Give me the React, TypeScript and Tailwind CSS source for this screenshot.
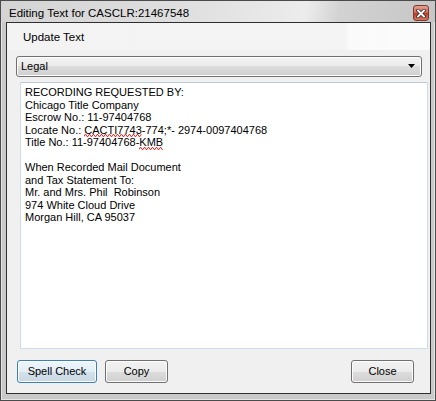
import React from "react";

const font = { fontFamily: '"Liberation Sans", Arial, sans-serif' };

function Squiggle({ children }: { children: React.ReactNode }) {
  const id = React.useId().replace(/:/g, "");
  return (
    <span className="relative inline-block">
      {children}
      <svg className="absolute left-0 bottom-[-1px] w-full h-[3px]" height="3">
        <defs>
          <pattern id={`sq${id}`} width="4" height="3" patternUnits="userSpaceOnUse">
            <path d="M0 2.5 L1 0.5 L2 0.5 L3 2.5 L4 2.5" stroke="#ff2a2a" strokeWidth="1" fill="none" />
          </pattern>
        </defs>
        <rect width="100%" height="3" fill={`url(#sq${id})`} />
      </svg>
    </span>
  );
}

export default function App() {
  const btn =
    "h-[23px] rounded-[3px] border text-[11px] text-black flex items-center justify-center shadow-[inset_0_0_0_1px_#fcfcfc]";
  const grayGrad =
    "border-[#707070] bg-[linear-gradient(#f2f2f2,#ebebeb_50%,#dddddd_50%,#cfcfcf)]";
  return (
    <div className="w-[436px] h-[401px] bg-white" style={font}>
      <div className="w-[436px] h-[401px] border border-[#4b4b4b] flex flex-col bg-[#c9c9c9] shadow-[inset_0_0_0_1px_#e6e6e6]">
        {/* title bar */}
        <div className="h-[21px] flex items-start justify-between bg-[linear-gradient(100deg,#d4d4d4_0%,#dedede_40%,#ececec_70%,#d2d2d2_78%,#c6c6c6_100%)]">
          <span className="text-[11.5px] text-black pl-[8px] pt-[5px] leading-[14px]">
            Editing Text for CASCLR:21467548
          </span>
          <div className="mt-[4px] mr-[6px] w-[16px] h-[16px] rounded-[3px] border border-[#7a3a30] bg-[linear-gradient(#e8a090,#d06550_50%,#b83a28_50%,#d8765e)] flex items-center justify-center">
            <svg width="10" height="9" viewBox="0 0 10 9">
              <path d="M2 1.5 L8 7.5 M8 1.5 L2 7.5" stroke="#3a2a2a" strokeWidth="3.4" strokeLinecap="square" />
              <path d="M2 1.5 L8 7.5 M8 1.5 L2 7.5" stroke="#ffffff" strokeWidth="1.8" strokeLinecap="square" />
            </svg>
          </div>
        </div>
        {/* frame body */}
        <div className="flex-1 pl-[5px] pr-[4px] pb-[6px] flex flex-col">
          <div className="flex-1 border border-[#2e2e2e] bg-[#f0f0f0] flex flex-col">
            {/* menu strip */}
            <div className="h-[27px] flex items-center pl-[16px] bg-[linear-gradient(90deg,#f3f3f3_0%,#f4f4f4_80%,#fafafa_81%,#fbfbfb_100%)]">
              <span className="text-[11.5px] text-black leading-[14px]">Update Text</span>
            </div>
            {/* combo */}
            <div
              className={`mt-[6px] ml-[9px] w-[406px] h-[21px] rounded-[3px] border flex items-center justify-between pl-[4px] pr-[5px] shadow-[inset_0_0_0_1px_#fcfcfc] ${grayGrad}`}
            >
              <span className="text-[11px] text-black">Legal</span>
              <svg width="8" height="5" viewBox="0 0 8 5">
                <path d="M0 0 H7 L3.5 4 Z" fill="#000" />
              </svg>
            </div>
            {/* text area */}
            <div className="mt-[5px] ml-[13px] w-[408px] h-[267px] border border-[#cddcea] border-t-[#bccbda] bg-white pl-[4px] pt-[3px] text-[11px] leading-[12.5px] text-black whitespace-pre">
              <div>RECORDING REQUESTED BY:</div>
              <div>Chicago Title Company</div>
              <div>Escrow No.: 11-97404768</div>
              <div>
                Locate No.: <Squiggle>CACTI7743</Squiggle>-774;*- 2974-0097404768
              </div>
              <div>
                Title No.: 11-97404768-<Squiggle>KMB</Squiggle>
              </div>
              <div>&nbsp;</div>
              <div>When Recorded Mail Document</div>
              <div>and Tax Statement To:</div>
              <div>Mr. and Mrs. Phil  Robinson</div>
              <div>974 White Cloud Drive</div>
              <div>Morgan Hill, CA 95037</div>
            </div>
            {/* buttons */}
            <div className="mt-[11px] flex items-center pl-[10px] pr-[16px]">
              <div
                className={`${btn} w-[80px] border-[#3c7fb1] shadow-[inset_0_0_0_1px_#c8e8f8] bg-[linear-gradient(#eef6fb,#e3eef6_50%,#d4e2ec_50%,#c8d8e4)]`}
              >
                Spell Check
              </div>
              <div className={`${btn} ${grayGrad} w-[63px] ml-[8px]`}>Copy</div>
              <div className="flex-1" />
              <div className={`${btn} ${grayGrad} w-[63px]`}>Close</div>
            </div>
          </div>
        </div>
      </div>
    </div>
  );
}
